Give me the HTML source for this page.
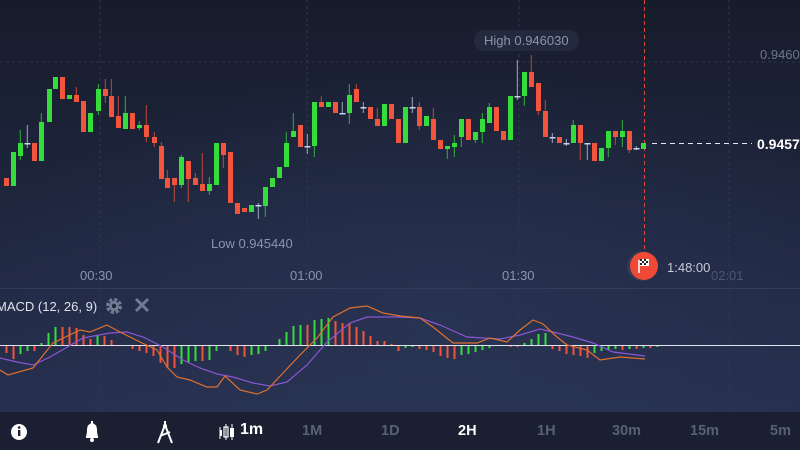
<!DOCTYPE html>
<html><head><meta charset="utf-8">
<style>
html,body{margin:0;padding:0;width:800px;height:450px;overflow:hidden;background:#1b2134;font-family:"Liberation Sans",sans-serif}
#c{position:absolute;left:0;top:0}
.t{position:absolute;font-size:13px;color:#8b93ad;white-space:nowrap}
.tb{position:absolute;top:423px;font-size:14.5px;color:#566077;font-weight:bold}
</style></head><body>
<svg id="c" width="800" height="450" xmlns="http://www.w3.org/2000/svg">
<defs>
<linearGradient id="bg" x1="0" y1="0" x2="0" y2="1">
<stop offset="0" stop-color="#171c2b"/><stop offset="0.55" stop-color="#1f2740"/><stop offset="1" stop-color="#27304f"/>
</linearGradient>
<radialGradient id="glow" cx="0.55" cy="0.75" r="0.6"><stop offset="0" stop-color="#2c3758" stop-opacity="0.6"/><stop offset="1" stop-color="#2c3758" stop-opacity="0"/></radialGradient>
</defs>
<rect width="800" height="412" fill="url(#bg)"/>
<rect width="800" height="412" fill="url(#glow)"/>
<g stroke="#2e3650" stroke-width="1" stroke-dasharray="3,3">
<line x1="100" y1="0" x2="100" y2="412"/><line x1="307" y1="0" x2="307" y2="412"/>
<line x1="519" y1="0" x2="519" y2="412"/><line x1="729" y1="0" x2="729" y2="412"/>
<line x1="0" y1="62" x2="800" y2="62"/>
</g>
<line x1="0" y1="288.5" x2="800" y2="288.5" stroke="#343d57"/>
<line x1="644.5" y1="0" x2="644.5" y2="255" stroke="#d8493a" stroke-width="1" stroke-dasharray="4,3"/>
<line x1="652" y1="143.5" x2="752" y2="143.5" stroke="#e6e8f0" stroke-width="1" stroke-dasharray="5,4"/>
<g id="candles"></g>
<line x1="0" y1="345.5" x2="800" y2="345.5" stroke="#dfe4ee" stroke-width="1"/>
<g id="hist"></g>
<path fill="none" stroke="#8b56d6" stroke-width="1.2" d="M0,358 L17,362 L33,365 L50,357 L83,338 L110,333 L127,332 L143,337 L163,347 L183,360 L200,368 L217,374 L233,377 L253,383 L270,386 L287,382 L307,365 L327,342 L350,323 L367,317 L400,317 L420,318 L440,325 L467,337 L500,339 L520,335 L540,329 L553,332 L573,337 L593,343 L613,352 L645,356"/>
<path fill="none" stroke="#e0702e" stroke-width="1.2" d="M0,370 L8,375 L33,368 L53,343 L80,330 L90,332 L107,325 L120,332 L140,342 L157,350 L167,367 L177,377 L190,380 L207,387 L217,387 L225,376 L240,390 L257,394 L267,390 L283,373 L300,355 L317,338 L333,317 L350,308 L367,306 L383,313 L400,316 L420,318 L433,327 L453,343 L477,343 L490,338 L507,342 L520,330 L533,320 L543,324 L557,337 L567,345 L587,350 L600,360 L620,357 L633,358 L645,359"/>
<rect x="0" y="412" width="800" height="38" fill="#1a2032"/>
<circle cx="642" cy="266" r="15" fill="#3a4152" opacity="0.7"/>
<circle cx="644" cy="266" r="14" fill="#f04a37"/>
<path d="M639,260 L639,273" stroke="#fff" stroke-width="1.5"/>
<rect x="640" y="259" width="9" height="7" fill="#fff"/>
<g fill="#222"><rect x="640" y="259" width="2" height="2"/><rect x="644" y="259" width="2" height="2"/><rect x="642" y="261" width="2" height="2"/><rect x="646" y="261" width="2" height="2"/><rect x="640" y="263" width="2" height="2"/><rect x="644" y="263" width="2" height="2"/></g>
<circle cx="19" cy="432" r="8" fill="#fff"/><rect x="18" y="430" width="2.4" height="6" fill="#1a2032"/><circle cx="19.2" cy="427.5" r="1.3" fill="#1a2032"/>
<path d="M86,438 L86,436 Q87,434 87,430 Q87,424 92,423 Q97,424 97,430 Q97,434 98,436 L98,438 Z" fill="#fff"/><rect x="91" y="421" width="2" height="3" fill="#fff"/><circle cx="92" cy="440" r="2" fill="#fff"/>
<path d="M165,421 L165,425 M165,425 L158,443 M165,425 L172,443 M160,436 L170,432" stroke="#fff" stroke-width="2" fill="none"/><circle cx="165" cy="426" r="2" fill="#fff"/>
<g fill="#fff"><rect x="220" y="430" width="2" height="6"/><rect x="219.5" y="427" width="1" height="12"/><rect x="224" y="427" width="4" height="10" fill="none" stroke="#fff" stroke-width="1.2"/><rect x="225.5" y="424" width="1" height="16"/><rect x="230" y="428" width="4" height="9"/><rect x="231.5" y="424" width="1" height="16"/></g>
</svg>
<div class="t" style="left:80px;top:268px">00:30</div>
<div class="t" style="left:290px;top:268px">01:00</div>
<div class="t" style="left:502px;top:268px">01:30</div>
<div class="t" style="left:711px;top:268px;color:#4d5670">02:01</div>
<div class="t" style="left:667px;top:260px;color:#c6cbd8">1:48:00</div>
<div class="t" style="left:474px;top:30px;background:#232a3e;border-radius:10px;padding:3px 10px;">High 0.946030</div>
<div class="t" style="left:211px;top:236px">Low 0.945440</div>
<div class="t" style="left:760px;top:47px;color:#6d7590">0.9460</div>
<div class="t" style="left:757px;top:136px;color:#fff;font-weight:bold;font-size:14px">0.9457</div>
<div class="t" style="left:-4px;top:299px;color:#dfe3ec;font-size:13px">MACD (12, 26, 9)</div>
<svg style="position:absolute;left:104px;top:296px" width="20" height="20" viewBox="0 0 20 20"><circle cx="10" cy="10" r="6" fill="none" stroke="#737b92" stroke-width="4" stroke-dasharray="3,1.7"/><circle cx="10" cy="10" r="5" fill="#737b92"/><circle cx="10" cy="10" r="2.2" fill="#1f2740"/></svg>
<svg style="position:absolute;left:133px;top:296px" width="18" height="18"><path d="M3,3 L15,15 M15,3 L3,15" stroke="#737b92" stroke-width="3"/></svg>
<div class="tb" style="left:240px;color:#fff;font-size:16px;top:421px">1m</div>
<div class="tb" style="left:302px">1M</div>
<div class="tb" style="left:381px">1D</div>
<div class="tb" style="left:458px;color:#fff">2H</div>
<div class="tb" style="left:537px">1H</div>
<div class="tb" style="left:612px">30m</div>
<div class="tb" style="left:690px">15m</div>
<div class="tb" style="left:770px">5m</div>
<script>
var G='#35dd3a',R='#f2553c',W='#c9d3ee';
var C=[[4,178,186,R],[11,152,186,G],[18,143,156,G,130,160],[25,143,144,W,125,148],[32,143,161,R],[39,122,161,G,113],[47,89,122,G],[53,77,89,G],[60,77,99,R],[67,95,99,G],[74,95,102,R,87],[81,101,132,R],[88,113,132,G],[96,89,111,G,84,115],[103,89,96,R,79,103],[109,96,117,R,79],[116,116,128,R,96],[123,113,129,G,96],[130,113,129,R],[137,125,128,G,121,130],[144,125,137,R,105,142],[152,137,143,R,132,147],[159,146,179,R,142],[165,178,188,R,170],[172,178,185,R,178,202],[179,157,185,G,155,188],[186,161,179,R,161,202],[193,178,185,R,173],[200,184,191,R,153],[207,184,191,G,177,195],[214,143,185,G],[221,143,155,R,143,168],[228,152,203,R],[235,203,214,R],[242,208,212,R],[249,205,212,G],[256,205,206,W,203,219],[263,187,206,G,187,217],[270,178,187,G],[277,167,178,G],[284,143,167,G,132],[291,131,137,G,113],[298,125,147,R],[305,146,147,W,134,154],[312,102,146,G,102,157],[319,102,107,R,96],[326,102,107,G],[333,102,113,R],[340,113,114,W,102],[347,95,113,G,84,124],[354,89,102,R,84],[361,107,108,W,102,113],[368,107,119,R],[375,119,126,R,108],[382,104,126,G],[389,104,119,R],[396,119,143,R],[403,107,143,G],[410,107,108,W,97,113],[417,107,126,R,102,130],[424,116,126,G],[431,119,140,R,108],[438,140,149,R],[445,146,149,G,146,159],[452,143,147,G,135,157],[459,119,137,G,119,147],[466,119,140,R],[473,132,140,G,132,143],[480,119,132,G,113,143],[487,107,123,G,103],[494,107,131,R],[501,131,140,R],[508,96,140,G],[515,96,97,W,60,100],[522,72,96,G,72,106],[529,72,87,R,55],[536,83,111,R,83,115],[543,111,137,R,100],[550,137,138,W,133,143],[557,137,143,R],[564,143,144,W,139,146],[571,125,143,G,120],[578,125,143,R,125,160],[585,143,144,W,143,160],[592,143,161,R],[599,148,161,G],[606,131,148,G,131,157],[613,131,137,R,131,145],[620,131,137,G,120,147],[627,131,150,R,131,153],[634,148,149,W,146,150],[641,143,149,G]];
var s='';C.forEach(function(c){var x=c[0],col=c[3];var wt=c[4]||c[1],wb=c[5]||c[2];
s+='<rect x="'+(x+1.8)+'" y="'+wt+'" width="1" height="'+(wb-wt)+'" fill="'+col+'" opacity="0.75"/>';
if(col==W)s+='<rect x="'+(x-0.5)+'" y="'+c[1]+'" width="6" height="1.5" fill="'+W+'"/>';
else s+='<rect x="'+x+'" y="'+c[1]+'" width="5" height="'+Math.max(2,c[2]-c[1])+'" fill="'+col+'"/>';});
document.getElementById('candles').innerHTML=s;
var H=[-7,-13,-8,-5,-5,2,12,18,18,18,17,10,6,10,9,5,0,0,-3,-5,-7,-10,-17,-21,-22,-18,-16,-15,-15,-14,-5,0,-5,-9,-11,-9,-8,-5,0,6,13,19,20,20,25,26,27,24,22,22,18,14,9,4,4,1,-5,-2,-1,-3,-4,-6,-10,-12,-13,-9,-8,-6,-4,-2,0,0,-1,-1,2,6,11,12,-3,-5,-8,-9,-10,-12,-7,-5,-4,-3,-4,-3,-3,-2,-2,-1];
var h='';for(var i=0;i<H.length;i++){var v=H[i];if(v==0)continue;var x=4+7*i+1.5;var up=i==0?false:(v>H[i-1]);var col=up?G:R;
h+='<rect x="'+x+'" y="'+(v>0?345-v:346)+'" width="2" height="'+Math.abs(v)+'" fill="'+col+'"/>';}
document.getElementById('hist').innerHTML=h;
</script>
</body></html>
